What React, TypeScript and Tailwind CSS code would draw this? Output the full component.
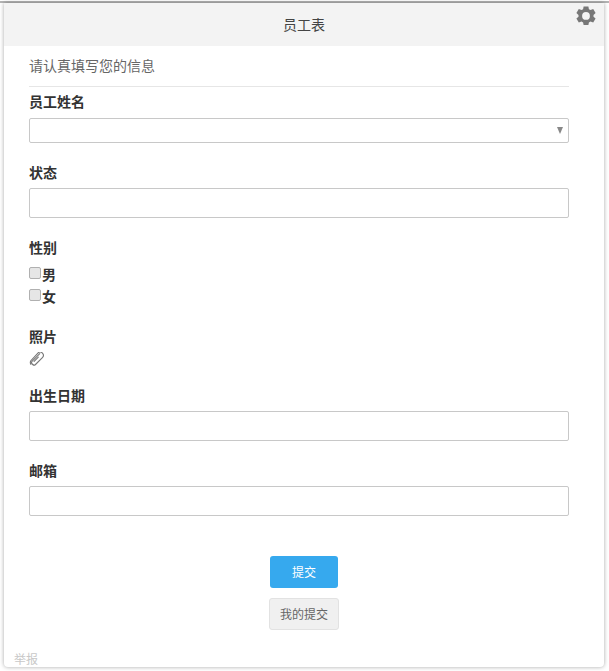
function Label({ children }: { children: string }) {
  return <div className="h-[20px] text-[14px] leading-[20px] font-bold text-[#333]">{children}</div>
}

function TextInput() {
  return <div className="mt-[6px] h-[30px] rounded-[2px] border border-[#c8c8c8] bg-white" />
}

function GenderOption({ label }: { label: string }) {
  return (
    <label className="flex h-[22px] items-center text-[14px] font-bold text-[#333]">
      <span className="mb-[2px] h-[12px] w-[12px] rounded-[2px] border border-[#b0b0b0] bg-[#e6e6e6]" />
      <span className="ml-px">{label}</span>
    </label>
  )
}

export default function App() {
  return (
    <div className="h-[671px] w-[609px] overflow-hidden bg-white pt-[1px] font-['Noto_Sans_CJK_SC','Liberation_Sans',sans-serif]">
      <div className="h-[2px] bg-[#b4b4b4]" />
      <div className="relative mr-[5px] ml-[4px] h-[664px] rounded-b-[4px] bg-white shadow-[0_0_4px_rgba(0,0,0,0.35)]">
        {/* Header */}
        <div className="flex h-[43px] items-center justify-center bg-[#f3f3f3] text-[14px] text-[#444]">
          员工表
        </div>
        <svg className="absolute top-[3px] right-[8px] h-[20px] w-[20px]" viewBox="0 0 20 20" fill="#777">
          <path
            fillRule="evenodd"
            d="M7.6 0.5h4.8l.5 2.7 1.6.8 2.7-1 2.4 4.1-2.1 1.8v1.8l2.1 1.800-2.4 4.100-2.700-1-1.600.8-.5 2.600H7.600l-.5-2.600-1.600-.8-2.700 1L.4 12.500l2.100-1.800V8.900L.4 7.100l2.400-4.100 2.700 1 1.600-.8zM10 6a3.900 3.900 0 1 0 0 7.800A3.900 3.900 0 0 0 10 6z"
          />
        </svg>

        <div className="pr-[35px] pl-[25px]">
          <div className="flex h-[41px] items-center border-b border-[#e6e6e6] pb-[2px] text-[14px] text-[#666]">
            请认真填写您的信息
          </div>

          <div className="mt-[4px]">
            <Label>员工姓名</Label>
            <div className="mt-[7px] flex h-[25px] items-center justify-end rounded-[2px] border border-[#c8c8c8] bg-white pr-[5px]">
              <span className="h-0 w-0 border-x-[3.5px] border-t-[7px] border-x-transparent border-t-[#888]" />
            </div>
          </div>

          <div className="mt-[19px]">
            <Label>状态</Label>
            <TextInput />
          </div>

          <div className="mt-[19px]">
            <Label>性别</Label>
            <div className="mt-[6px]">
              <GenderOption label="男" />
              <GenderOption label="女" />
            </div>
          </div>

          <div className="mt-[19px]">
            <Label>照片</Label>
            {/* paperclip */}
            <svg
              className="mt-[6px] h-[15px] w-[15px]"
              viewBox="0 0 15 15"
              fill="none"
              stroke="#777"
              strokeWidth="1.100"
              strokeLinecap="round"
            >
              <path d="M10.800 1.600 3.200 9.200a2 2 0 0 0 0 2.800l.5.500a2 2 0 0 0 2.800 0l6.900-6.900a3.200 3.200 0 0 0 0-4.500 3.200 3.200 0 0 0-4.500 0L1.800 8.700a3.800 3.800 0 0 0 0 3.600" />
              <path d="M9.300 5.100 5.100 9.300" />
            </svg>
          </div>

          <div className="mt-[18px]">
            <Label>出生日期</Label>
            <TextInput />
          </div>

          <div className="mt-[19px]">
            <Label>邮箱</Label>
            <TextInput />
          </div>

          <div className="mt-[40px] mr-[-10px] flex flex-col items-center">
            <button className="h-[32px] w-[68px] rounded-[3px] bg-[#36a9ee] text-[12px] text-white">提交</button>
            <button className="mt-[10px] h-[32px] w-[70px] rounded-[3px] border border-[#e2e2e2] bg-[#f0f0f0] text-[12px] text-[#666]">
              我的提交
            </button>
          </div>
        </div>

        <div className="absolute bottom-[-1px] left-[10px] text-[12px] leading-[18px] text-[#c8c8c8]">举报</div>
      </div>
    </div>
  )
}
